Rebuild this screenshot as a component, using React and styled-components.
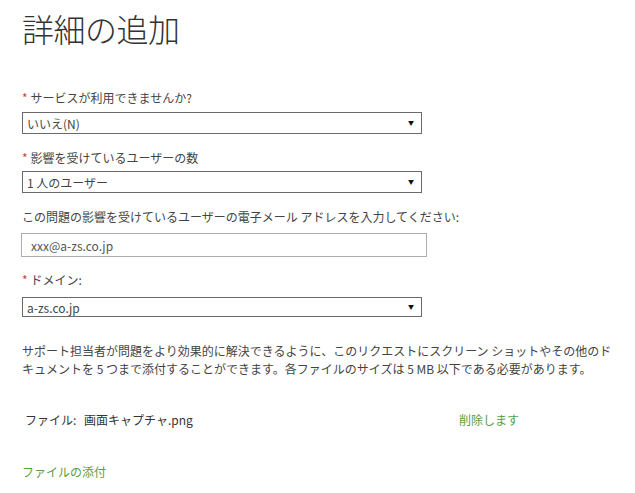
import React from "react";
import styled, { createGlobalStyle } from "styled-components";

const Global = createGlobalStyle`
  html, body { margin: 0; padding: 0; background: #fff; }
  body {
    font-family: "Noto Sans CJK JP", "Noto Sans", sans-serif;
    color: #444;
  }
`;

const Page = styled.div`
  width: 635px;
  height: 493px;
  box-sizing: border-box;
  padding: 6px 0 0 22px;
  display: flex;
  flex-direction: column;
  overflow: hidden;
`;

const Title = styled.h1`
  margin: 0;
  font-size: 32px;
  font-weight: 300;
  line-height: 44px;
  color: #333;
  letter-spacing: -0.5px;
`;

const Field = styled.div`
  display: flex;
  flex-direction: column;
  margin-top: ${(p) => p.$top}px;
`;

const Label = styled.label`
  font-size: 12px;
  line-height: 16px;
  color: #444;
  margin-bottom: ${(p) => p.$gap}px;
`;

const Star = styled.span`
  color: #c8463a;
  margin-right: 3px;
`;

const SelectBox = styled.div`
  box-sizing: border-box;
  width: 400px;
  height: ${(p) => p.$h || 22}px;
  border: 1px solid #6a6a6a;
  display: flex;
  align-items: center;
  justify-content: space-between;
  padding: 0 7px 0 4px;
  font-size: 12px;
  color: #444;
`;

const Arrow = styled.span`
  font-size: 6px;
  color: #111;
  line-height: 1;
`;

const TextInput = styled.div`
  box-sizing: border-box;
  width: 406px;
  height: 24px;
  margin-left: -1px;
  border: 1px solid #a9afad;
  display: flex;
  align-items: center;
  padding-left: 9px;
  font-size: 12px;
  color: #555;
`;

const Note = styled.p`
  margin: 25px 0 0 0;
  font-size: 12px;
  line-height: 18px;
  color: #444;
  white-space: nowrap;
`;

const FileRow = styled.div`
  display: flex;
  align-items: center;
  margin-top: 34px;
  padding-left: 3px;
  font-size: 12px;
  line-height: 16px;
  color: #333;
`;

const FileLabel = styled.span`
  width: 59px;
`;

const FileName = styled.span`
  width: 375px;
`;

const Link = styled.a`
  color: #5a9e3c;
  text-decoration: none;
  font-size: 12px;
  line-height: 16px;
  cursor: pointer;
`;

const AttachLink = styled(Link)`
  margin-top: 36px;
  align-self: flex-start;
`;

export default function App() {
  return (
    <>
      <Global />
      <Page>
        <Title>詳細の追加</Title>
        <Field $top={40}>
          <Label $gap={6}>
            <Star>*</Star>サービスが利用できませんか?
          </Label>
          <SelectBox>
            <span>いいえ(N)</span>
            <Arrow>▼</Arrow>
          </SelectBox>
        </Field>
        <Field $top={16}>
          <Label $gap={5}>
            <Star>*</Star>影響を受けているユーザーの数
          </Label>
          <SelectBox>
            <span>1 人のユーザー</span>
            <Arrow>▼</Arrow>
          </SelectBox>
        </Field>
        <Field $top={16}>
          <Label $gap={8}>
            この問題の影響を受けているユーザーの電子メール アドレスを入力してください:
          </Label>
          <TextInput>xxx@a-zs.co.jp</TextInput>
        </Field>
        <Field $top={15}>
          <Label $gap={9}>
            <Star>*</Star>ドメイン:
          </Label>
          <SelectBox $h={20}>
            <span>a-zs.co.jp</span>
            <Arrow>▼</Arrow>
          </SelectBox>
        </Field>
        <Note>
          サポート担当者が問題をより効果的に解決できるように、このリクエストにスクリーン ショットやその他のド
          <br />
          キュメントを 5 つまで添付することができます。各ファイルのサイズは 5 MB 以下である必要があります。
        </Note>
        <FileRow>
          <FileLabel>ファイル:</FileLabel>
          <FileName>画面キャプチャ.png</FileName>
          <Link>削除します</Link>
        </FileRow>
        <AttachLink>ファイルの添付</AttachLink>
      </Page>
    </>
  );
}
